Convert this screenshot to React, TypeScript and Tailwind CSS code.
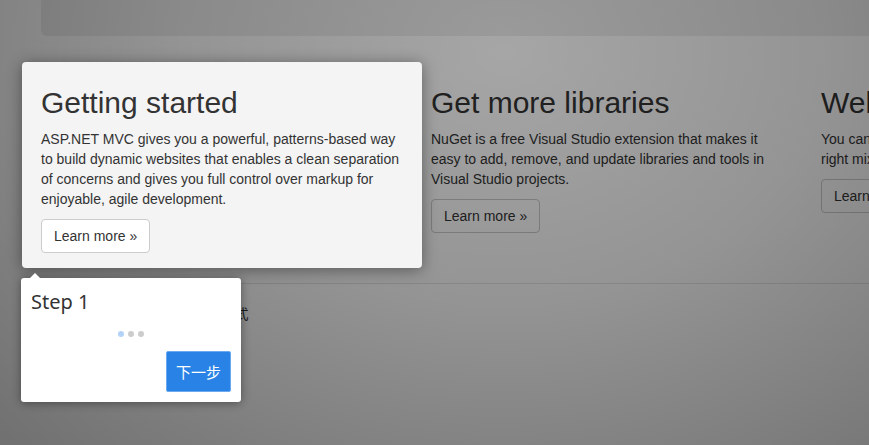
import React from 'react';

const columns = [
  {
    title: 'Getting started',
    body: 'ASP.NET MVC gives you a powerful, patterns-based way to build dynamic websites that enables a clean separation of concerns and gives you full control over markup for enjoyable, agile development.',
  },
  {
    title: 'Get more libraries',
    body: 'NuGet is a free Visual Studio extension that makes it easy to add, remove, and update libraries and tools in Visual Studio projects.',
  },
  {
    title: 'Web Hosting',
    body: 'You can easily find a web hosting company that offers the right mix of features and price for your applications.',
  },
];

const App: React.FC = () => {
  return (
    <main className="relative w-[869px] h-[445px] overflow-hidden bg-white font-['Liberation_Sans',Arial,sans-serif] text-[14px] leading-[20px] text-[#333]">
      {/* page under the tour */}
      <div className="w-[1170px] ml-[26px] px-[15px]">
        <div className="h-[36px] bg-[#eeeeee] rounded-b-[6px] mb-[30px]" />

        <div className="flex -mx-[15px]">
          {columns.map((col, i) => (
            <div key={col.title} className={`w-[390px] shrink-0 px-[15px] ${i === 0 ? 'relative z-20' : ''}`}>
              {i === 0 && (
                <div className="absolute -top-[4px] -bottom-[5px] -left-[4px] -right-[6px] -z-10 bg-[#f4f4f4] rounded-[4px] shadow-[0_2px_15px_rgba(0,0,0,0.4)]" />
              )}
              <h2 className="mt-[20px] mb-[10px] text-[30px] leading-[33px] font-normal text-[#333]">{col.title}</h2>
              <p className="mb-[10px]">{col.body}</p>
              <p className="mb-[10px]">
                <a className="inline-block px-[12px] py-[6px] border border-[#cccccc] rounded-[4px] bg-white text-[#333] leading-[20px]">Learn more »</a>
              </p>
            </div>
          ))}
        </div>

        <hr className="mt-[20px] mb-[20px] border-t border-[#e6e6e6]" />
        <footer>
          <p className="font-['Liberation_Sans','Noto_Sans_CJK_SC',sans-serif]">© 2018 - 我的 ASP.NET 应用程式</p>
        </footer>
      </div>

      {/* overlay */}
      <div className="absolute inset-0 z-10 bg-[radial-gradient(ellipse_at_58%_12%,rgba(0,0,0,0.35)_0%,rgba(0,0,0,0.42)_45%,rgba(0,0,0,0.56)_100%)]" />

      {/* tooltip */}
      <div className="absolute z-30 left-[21px] top-[278px] w-[220px] h-[124px] bg-white rounded-[3px] shadow-[0_1px_10px_rgba(0,0,0,0.4)] px-[10px] pt-[10px] pb-[10px] flex flex-col font-['Noto_Sans','Noto_Sans_CJK_SC',sans-serif]">
        <div className="absolute -top-[10px] left-[9px] w-0 h-0 border-[5px] border-transparent border-b-white" />
        <h1 className="text-[20px] leading-[28px] font-normal text-[#333]">Step 1</h1>
        <div className="flex justify-center gap-[4px] mt-[15px]">
          <span className="w-[6px] h-[6px] rounded-full bg-[#b3d2f7]" />
          <span className="w-[6px] h-[6px] rounded-full bg-[#cccccc]" />
          <span className="w-[6px] h-[6px] rounded-full bg-[#cccccc]" />
        </div>
        <div className="flex justify-end mt-[14px]">
          <button className="w-[65px] h-[41px] bg-[#2983e6] border border-[#6aa8ef] rounded-[2px] text-white text-[15px] font-['Noto_Sans_CJK_SC',sans-serif]">下一步</button>
        </div>
      </div>
    </main>
  );
};

export default App;
